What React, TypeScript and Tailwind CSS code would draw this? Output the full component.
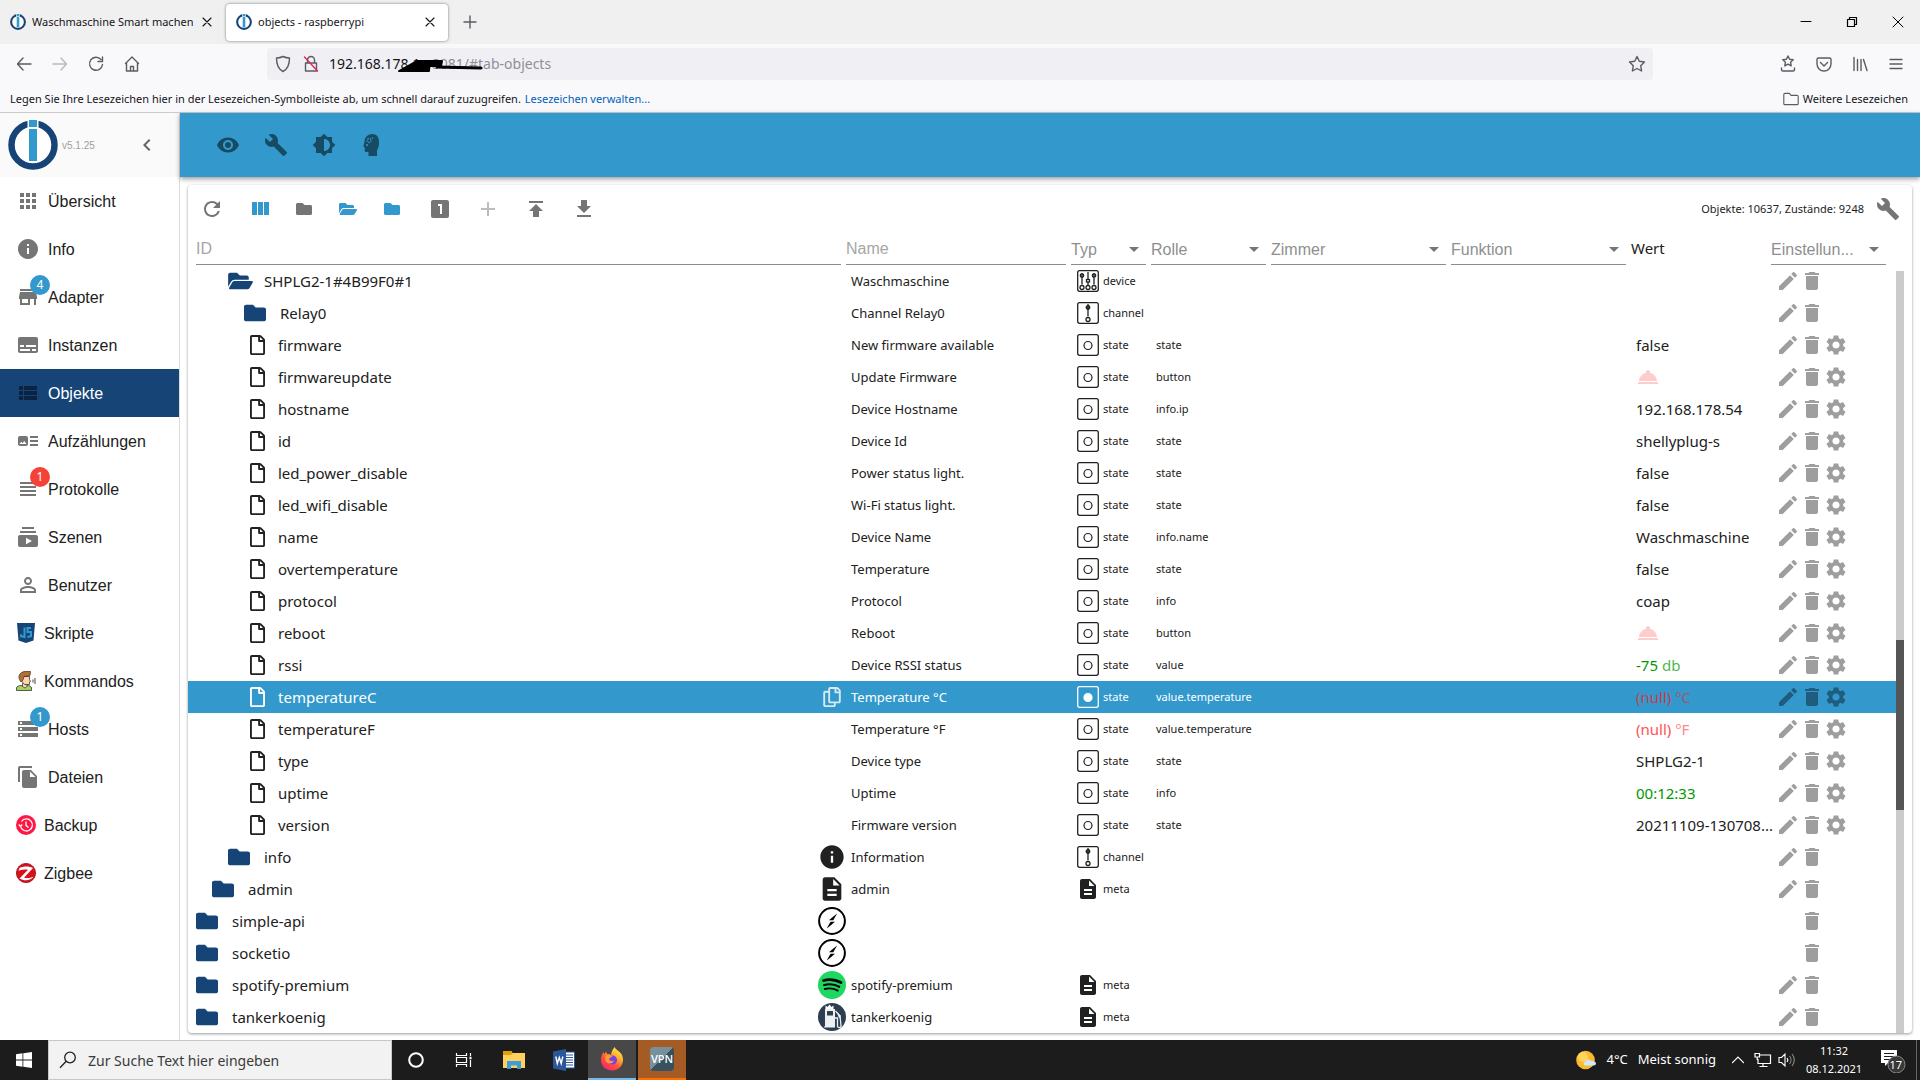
import type { ComponentType, ReactNode } from "react";
import {
  MdAdd,
  MdApps,
  MdArrowDropDown,
  MdArtTrack,
  MdBrightness6,
  MdBuild,
  MdChevronLeft,
  MdDelete,
  MdDescription,
  MdEdit,
  MdFileCopy,
  MdInfo,
  MdLooksOne,
  MdPersonOutline,
  MdRefresh,
  MdRoomService,
  MdSettings,
  MdStorage,
  MdSubscriptions,
  MdSubtitles,
  MdViewHeadline,
  MdViewList,
  MdVisibility,
} from "react-icons/md";
import { FaFolder, FaFolderOpen, FaRegCopy, FaRegFile } from "react-icons/fa";

type IconType = ComponentType<{ className?: string }>;

const path = (d: string): IconType =>
  function PathIcon({ className }) {
    return (
      <svg viewBox="0 0 24 24" fill="currentColor" className={className}>
        <path d={d} />
      </svg>
    );
  };

const StoreIcon = path("M20 4H4v2h16V4zm1 10v-2l-1-5H4l-1 5v2h1v6h10v-6h4v6h2v-6h1zm-9 4H6v-4h6v4z");
const ColumnsIcon = path("M10 18h5V5h-5v13zm-6 0h5V5H4v13zM16 5v13h5V5h-5z");
const UploadIcon = path("M5 4v2h14V4H5zm0 10h4v6h6v-6h4l-7-7-7 7z");
const DownloadIcon = path("M19 9h-4V3H9v6H5l7 7 7-7zM5 18v2h14v-2H5z");

function HeadIcon({ className }: { className?: string }) {
  return (
    <svg viewBox="0 0 24 24" className={className}>
      <path
        fill="currentColor"
        d="M12.500 1C8 1 5 4 4.500 8c0 1-.1 1.700-.5 2.700L3.500 13c-.2.500 0 .9.500 1l.7.3v3.200c0 1 .6 1.500 1.500 1.500l2.300-.2V23H17v-6c1.700-2 2-4 2-8.500C19 4 16.500 1 12.500 1z"
      />
      <circle cx="9" cy="7.500" r="2" fill="none" stroke="#3399cc" strokeWidth="1.300" strokeDasharray="1.400 0.900" />
      <circle cx="7" cy="12" r="1" fill="#3399cc" />
      <circle cx="12.500" cy="5" r="0.800" fill="#3399cc" />
    </svg>
  );
}

function BrokerLogo({ className }: { className?: string }) {
  return (
    <svg viewBox="0 0 50 50" className={className}>
      <circle cx="25" cy="25" r="21.500" fill="#fff" stroke="#164477" strokeWidth="6.500" />
      <rect x="19.500" y="0" width="11" height="9" fill="#fff" />
      <rect x="21" y="0" width="8" height="7" fill="#3399cc" />
      <rect x="21" y="9" width="8" height="32" fill="#3399cc" />
    </svg>
  );
}

/* ---------- Browser ---------- */

function Stroke({ children, className = "size-5" }: { children: ReactNode; className?: string }) {
  return (
    <svg
      viewBox="0 0 20 20"
      fill="none"
      stroke="currentColor"
      strokeWidth="1.400"
      strokeLinecap="round"
      strokeLinejoin="round"
      className={className}
    >
      {children}
    </svg>
  );
}

const CloseX = () => (
  <Stroke className="size-4">
    <path d="M5 5l10 10M15 5L5 15" />
  </Stroke>
);

function Browser() {
  return (
    <header className="shrink-0 border-b border-[#cccccc] bg-[#f9f9fb] text-[#15141a]">
      <div className="flex h-11 items-center bg-[#f0f0f0] text-[11px]">
        <div className="flex w-[226px] items-center gap-1.5 pl-2.5">
          <BrokerLogo className="size-4 shrink-0" />
          <span className="w-[161px] overflow-hidden whitespace-nowrap">Waschmaschine Smart machen</span>
          <button aria-label="Tab schließen"><CloseX /></button>
        </div>
        <div className="flex h-[37px] w-[222px] items-center gap-1.5 rounded bg-white px-2.5 shadow-[0_0_3px_rgba(0,0,0,0.5)]">
          <BrokerLogo className="size-4 shrink-0" />
          <span className="flex-1">objects - raspberrypi</span>
          <button aria-label="Tab schließen"><CloseX /></button>
        </div>
        <button className="ml-3 text-[#5b5b66]" aria-label="Neuer Tab">
          <Stroke><path d="M10 4v12M4 10h12" /></Stroke>
        </button>
        <div className="ml-auto flex items-center gap-[26px] pr-3 text-black">
          <button aria-label="Minimieren"><Stroke><path d="M5 9.500h10" strokeWidth="1" /></Stroke></button>
          <button aria-label="Verkleinern">
            <Stroke><path strokeWidth="1.200" d="M5.500 7.500h7v7h-7zM7.500 7.500v-2h7v7h-2" /></Stroke>
          </button>
          <button aria-label="Schließen"><Stroke><path strokeWidth="1" d="M5 5l10 10M15 5L5 15" /></Stroke></button>
        </div>
      </div>
      <div className="flex h-11 items-center pb-1 pl-3.5 pr-3.5 text-[#5b5b66]">
        <div className="flex w-[253px] items-center gap-4">
          <button aria-label="Zurück"><Stroke><path d="M17 10H3.500M9 4L3.500 10 9 16" /></Stroke></button>
          <button aria-label="Vor" className="opacity-40"><Stroke><path d="M3 10h13.500M11 4l5.500 6-5.500 6" /></Stroke></button>
          <button aria-label="Neu laden"><Stroke><path d="M16.500 10.500A6.500 6.500 0 1 1 15 5.500M16.500 3v4.500H12" /></Stroke></button>
          <button aria-label="Startseite"><Stroke><path d="M3.500 9.500L10 3l6.500 6.500M4.500 9v8h11V9M8.500 17v-4.500h3V17" /></Stroke></button>
        </div>
        <div className="relative flex h-8 flex-1 items-center rounded bg-[#f0f0f4] pl-1.5 pr-1.5">
          <Stroke><path d="M10 2.500c2 1 4.500 1.500 6.500 1.500 0 6-1.500 11-6.500 13.500C5 15 3.500 10 3.500 4 5.500 4 8 3.500 10 2.500z" /></Stroke>
          <Stroke className="ml-2 size-5">
            <path d="M4.500 9h11v8h-11zM6.500 9V6a3.500 3.500 0 0 1 7 0v3" />
            <path d="M3.500 3l13 14" stroke="#e22850" />
          </Stroke>
          <input aria-label="Adresse" className="ml-2 w-[99px] bg-transparent text-sm text-[#15141a]" defaultValue="192.168.178.1" />
          <span className="text-sm text-[#8f8f98]">:8081/#tab-objects</span>
          <svg viewBox="0 0 86 14" className="absolute left-[130px] top-[11px] h-[14px] w-[86px]">
            <path d="M2 12h30v-5h12l1-5H20z" stroke="#000" strokeWidth="2" fill="#000" strokeLinecap="round" strokeLinejoin="round" />
            <path d="M40 8l44 1" stroke="#000" strokeWidth="3" strokeLinecap="round" />
          </svg>
          <button className="ml-auto" aria-label="Lesezeichen">
            <Stroke><path d="M10 2.500l2.300 4.800 5.200.7-3.800 3.700.9 5.300L10 14.500 5.400 17l.9-5.300L2.500 8l5.200-.7z" /></Stroke>
          </button>
        </div>
        <div className="flex w-[253px] items-center justify-end gap-4">
          <button aria-label="Lesezeichenmenü">
            <Stroke><path d="M10 2l1.600 3.300 3.600.5-2.600 2.500.6 3.600L10 10.200l-3.200 1.700.6-3.600-2.600-2.500 3.600-.5zM3.500 14v1.500c0 1 .5 1.500 1.500 1.500h10c1 0 1.500-.5 1.500-1.500V14" /></Stroke>
          </button>
          <button aria-label="Pocket">
            <Stroke><path d="M4.500 4h11c1 0 1.500.5 1.500 1.500V10a7 7 0 0 1-14 0V5.500C3 4.500 3.500 4 4.500 4zM6.500 8.500L10 12l3.500-3.500" /></Stroke>
          </button>
          <button aria-label="Bibliothek"><Stroke><path d="M4 3.500v13M7.500 5.500v11M11 5.500v11M13.500 5.500l3.500 11" /></Stroke></button>
          <button aria-label="Menü"><Stroke><path d="M4 5.500h12M4 10h12M4 14.500h12" /></Stroke></button>
        </div>
      </div>
      <div className="flex h-6 items-center gap-1 px-2.5 pb-0.5 text-[11px]">
        <span>Legen Sie Ihre Lesezeichen hier in der Lesezeichen-Symbolleiste ab, um schnell darauf zuzugreifen.</span>
        <a href="#lesezeichen" className="text-[#0061bd]">Lesezeichen verwalten...</a>
        <button className="ml-auto flex items-center gap-1 pr-0.5">
          <Stroke className="size-4 text-[#5b5b66]"><path d="M1 16V4.500C1 3.500 1.500 3 2.500 3H8l2 2.500h7.500c1 0 1.500.5 1.500 1.500V16c0 .7-.5 1-1 1H2c-.7 0-1-.5-1-1z" /></Stroke>
          Weitere Lesezeichen
        </button>
      </div>
    </header>
  );
}

/* ---------- Sidebar ---------- */

function ScriptIcon() {
  return (
    <svg viewBox="0 0 20 20" className="size-5">
      <path d="M1 0h18l-1.500 17.500L10 20l-7.500-2.500z" fill="#164477" />
      <path d="M8.500 4.500V14l-3.500-.8v-2M15 5h-3.500v4H15v4.200l-3.500.8" fill="none" stroke="#3399cc" strokeWidth="2" />
    </svg>
  );
}

function VoiceIcon() {
  return (
    <svg viewBox="0 0 20 20" className="size-5">
      <path d="M.5 19.500V17c0-1.500 2.500-2.500 4.500-2.500h6c2.500 0 4.500 1 4.500 2.500v2.500z" fill="#a4d65e" stroke="#333" strokeWidth=".8" />
      <path d="M6.500 12v3.500l2.500 1.500 2-1.500V13" fill="#fbd3ae" stroke="#333" strokeWidth=".7" />
      <path d="M5.500 5.500h8v3l1 2-1 .5v2.500H8.500L6 10.500z" fill="#fbd3ae" stroke="#333" strokeWidth=".8" />
      <path d="M5 11C2.500 8 2 4 5 2c2.500-2 6-1.700 9.500-1.500L14 4.500c-2 1-3.500.8-6 .8L7 9z" fill="#b0703a" stroke="#4a2c14" strokeWidth=".7" />
      <path d="M17 8.500v3M19 7v6" stroke="#666" strokeWidth="1.200" />
    </svg>
  );
}

function BackupIcon() {
  return (
    <svg viewBox="0 0 20 20" className="size-5">
      <circle cx="10" cy="10" r="10" fill="#ff1744" />
      <path d="M4.500 11a6 6 0 1 0 1-4.500M10 6.500V10.500l2.500 2M2.800 9.500l1.700 2 1.800-2" fill="none" stroke="#fff" strokeWidth="1.300" />
    </svg>
  );
}

function ZigbeeIcon() {
  return (
    <svg viewBox="0 0 20 20" className="size-5">
      <circle cx="10" cy="10" r="9.600" fill="#d8101c" stroke="#8d0d14" strokeWidth=".8" />
      <path d="M3.500 5C7.500 3 13 3 17 5L8 14.800c3.500.5 6.500.3 9.500-1-2.500 3.700-9 4.700-14 1.700L12 6.700c-3-.5-6-.2-9.500 1z" fill="#fff" />
    </svg>
  );
}

type NavItem = { label: string; Icon: IconType; badge?: string; red?: boolean };

const NAV: NavItem[] = [
  { label: "Übersicht", Icon: MdApps },
  { label: "Info", Icon: MdInfo },
  { label: "Adapter", Icon: StoreIcon, badge: "4" },
  { label: "Instanzen", Icon: MdSubtitles },
  { label: "Objekte", Icon: MdViewList },
  { label: "Aufzählungen", Icon: MdArtTrack },
  { label: "Protokolle", Icon: MdViewHeadline, badge: "1", red: true },
  { label: "Szenen", Icon: MdSubscriptions },
  { label: "Benutzer", Icon: MdPersonOutline },
  { label: "Skripte", Icon: ScriptIcon },
  { label: "Kommandos", Icon: VoiceIcon },
  { label: "Hosts", Icon: MdStorage, badge: "1" },
  { label: "Dateien", Icon: MdFileCopy },
  { label: "Backup", Icon: BackupIcon },
  { label: "Zigbee", Icon: ZigbeeIcon },
];

function Sidebar() {
  return (
    <aside className="w-[180px] shrink-0 border-r border-[#dcdcdc] bg-white font-['Liberation_Sans',Arial,sans-serif]">
      <div className="flex h-16 items-center bg-[#fafafa] pl-2">
        <BrokerLogo className="size-[50px]" />
        <span className="ml-1 text-[10px] text-[#a0a0a0]">v5.1.25</span>
        <button className="ml-auto mr-5 text-[#666666]" aria-label="Menü einklappen">
          <MdChevronLeft className="size-6" />
        </button>
      </div>
      <nav>
        {NAV.map(({ label, Icon, badge, red }) => {
          const active = label === "Objekte";
          return (
            <a
              key={label}
              href={"#tab-" + label.toLowerCase()}
              className={
                "flex h-12 items-center gap-2 pl-4 text-base " +
                (active ? "bg-[#164477] text-white" : "text-[#212121]")
              }
            >
              <span className={"relative flex " + (active ? "text-[#0b2340]" : "text-[#757575]")}>
                <Icon className="size-6" />
                {badge && (
                  <span
                    className={
                      "absolute -right-2.5 -top-2.5 flex size-5 items-center justify-center rounded-full font-['Noto_Sans',sans-serif] text-xs text-white " +
                      (red ? "bg-[#f44336]" : "bg-[#3399cc]")
                    }
                  >
                    {badge}
                  </span>
                )}
              </span>
              <span className="pt-0.5">{label}</span>
            </a>
          );
        })}
      </nav>
    </aside>
  );
}

/* ---------- Object table ---------- */

function TypeIcon({ type, active }: { type: string; active?: boolean }) {
  if (type === "meta") return <MdDescription className="size-6" />;
  return (
    <svg viewBox="0 0 24 24" fill="none" stroke="currentColor" className="size-6">
      <rect x="1.700" y="1.700" width="20.600" height="20.600" rx="2" strokeWidth="1.300" />
      {type === "state" && <circle cx="12" cy="12.500" r="4" strokeWidth="1.200" fill={active ? "currentColor" : "none"} />}
      {(type === "channel" || type === "device") && (
        <g strokeWidth="1.300">
          {type === "channel" && (
            <>
              <circle cx="12" cy="6.500" r="1.800" fill="#666" />
              <path d="M12 3v12.500" />
              <circle cx="12" cy="18.500" r="2" />
            </>
          )}
          {type === "device" && (
            <>
              <path d="M6 4v11.500M12 3v13M18 4v11.500" />
              <circle cx="6" cy="6.500" r="1.700" fill="#666" />
              <rect x="10.500" y="10.500" width="3" height="2.500" fill="#fff" />
              <circle cx="18" cy="6.500" r="1.700" fill="#666" />
              <circle cx="6" cy="18.500" r="2" />
              <circle cx="12" cy="18.500" r="2" />
              <circle cx="18" cy="18.500" r="2" />
            </>
          )}
        </g>
      )}
    </svg>
  );
}

const SocketIcon = () => (
  <svg viewBox="0 0 28 28" className="size-7">
    <circle cx="14" cy="14" r="12.900" fill="#fff" stroke="#000" strokeWidth="2" />
    <path d="M11 13.200c2.700-2.200 5.300-4.500 8.200-6.600-1.300 2.200-2.600 4.400-3.900 6.600zM12.600 14.800h4.300c-2.700 2.300-5.300 4.500-8.200 6.600 1.300-2.200 2.600-4.400 3.900-6.600z" fill="#000" />
  </svg>
);

const SpotifyIcon = () => (
  <svg viewBox="0 0 28 28" className="size-7">
    <circle cx="14" cy="14" r="14" fill="#1ed760" />
    <g fill="none" stroke="#000" strokeLinecap="round">
      <path d="M5.500 9.500c5.500-1.500 12-1 17.500 2" strokeWidth="2.700" />
      <path d="M6.200 14c5-1.300 10.500-.8 15 1.800" strokeWidth="2.200" />
      <path d="M6.800 18c4.500-1 9-.6 13 1.600" strokeWidth="1.800" />
    </g>
  </svg>
);

const PumpIcon = () => (
  <svg viewBox="0 0 28 28" className="size-7">
    <circle cx="14" cy="14" r="14" fill="#2c3e50" />
    <path d="M7.500 2.500l2 1.500L11.500 1.500 13.500 4l2-1.500V6h-8z" fill="#fff" />
    <path d="M7 6h10v18.500H6V24l1-1z" fill="#ecf0f1" />
    <rect x="9" y="8" width="6" height="4.500" rx=".5" fill="#2c3e50" />
    <path d="M17 15h2.500v8c0 2.500 4 2 3.500-.5L22 13l-4.500-5" fill="none" stroke="#ecf0f1" strokeWidth="1.300" />
    <path d="M19 9l3.500 3.500V16l-2-2z" fill="#ecf0f1" />
  </svg>
);

const ID_ICONS: Record<string, ReactNode> = {
  copy: <FaRegCopy className="size-5 opacity-80" />,
  info: <MdInfo className="size-7" />,
  doc: <MdDescription className="size-7" />,
  socket: <SocketIcon />,
  spotify: <SpotifyIcon />,
  pump: <PumpIcon />,
};

type Row = {
  id: string;
  kind?: "open" | "folder";
  level?: number;
  icon?: string;
  name?: string;
  type?: string;
  role?: string;
  value?: string;
  unit?: string;
  tone?: "green" | "red";
};

const state = (id: string, name: string, role: string, value: string, extra: Partial<Row> = {}): Row => ({
  id, name, role, value, type: "state", ...extra,
});

const ROWS: Row[] = [
  { id: "SHPLG2-1#4B99F0#1", kind: "open", level: 2, name: "Waschmaschine", type: "device" },
  { id: "Relay0", kind: "folder", level: 3, name: "Channel Relay0", type: "channel" },
  state("firmware", "New firmware available", "state", "false"),
  state("firmwareupdate", "Update Firmware", "button", ""),
  state("hostname", "Device Hostname", "info.ip", "192.168.178.54"),
  state("id", "Device Id", "state", "shellyplug-s"),
  state("led_power_disable", "Power status light.", "state", "false"),
  state("led_wifi_disable", "Wi-Fi status light.", "state", "false"),
  state("name", "Device Name", "info.name", "Waschmaschine"),
  state("overtemperature", "Temperature", "state", "false"),
  state("protocol", "Protocol", "info", "coap"),
  state("reboot", "Reboot", "button", ""),
  state("rssi", "Device RSSI status", "value", "-75", { unit: "db", tone: "green" }),
  state("temperatureC", "Temperature °C", "value.temperature", "(null)", { unit: "°C", tone: "red", icon: "copy" }),
  state("temperatureF", "Temperature °F", "value.temperature", "(null)", { unit: "°F", tone: "red" }),
  state("type", "Device type", "state", "SHPLG2-1"),
  state("uptime", "Uptime", "info", "00:12:33", { tone: "green" }),
  state("version", "Firmware version", "state", "20211109-130708..."),
  { id: "info", kind: "folder", level: 2, icon: "info", name: "Information", type: "channel" },
  { id: "admin", kind: "folder", level: 1, icon: "doc", name: "admin", type: "meta" },
  { id: "simple-api", kind: "folder", level: 0, icon: "socket" },
  { id: "socketio", kind: "folder", level: 0, icon: "socket" },
  { id: "spotify-premium", kind: "folder", level: 0, icon: "spotify", name: "spotify-premium", type: "meta" },
  { id: "tankerkoenig", kind: "folder", level: 0, icon: "pump", name: "tankerkoenig", type: "meta" },
];

const INDENT = ["pl-2", "pl-6", "pl-10", "pl-14"];

function ObjectRow({ row }: { row: Row }) {
  const selected = row.id === "temperatureC";
  const isState = row.type === "state";
  const tone = row.tone === "green" ? "text-[#009900]" : row.tone === "red" ? (selected ? "text-[#c5414f]" : "text-[#ff5252]") : "";
  return (
    <tr className={"h-8 " + (selected ? "bg-[#3399cc] text-white" : "text-[#212121]")}>
      <td>
        <div className={"flex h-8 items-center " + (row.kind ? INDENT[row.level ?? 0] : "pl-[62px]")}>
          {row.kind === "open" && <FaFolderOpen className="mr-[11px] h-[22px] w-[25px] text-[#164477]" />}
          {row.kind === "folder" && <FaFolder className="mr-3.5 size-[22px] text-[#164477]" />}
          {!row.kind && <FaRegFile className="mr-[13px] h-5 w-[15px]" />}
          <span className="text-[15px]">{row.id}</span>
          <span className="ml-auto flex w-7 justify-center">{row.icon && ID_ICONS[row.icon]}</span>
        </div>
      </td>
      <td className="pl-[5px] pt-0.5 text-[13px]">{row.name}</td>
      <td className="pl-[5px]">
        {row.type && (
          <div className="flex items-center gap-[3px] text-[11px]">
            <TypeIcon type={row.type} active={selected} />
            {row.type}
          </div>
        )}
      </td>
      <td className="pl-[5px] text-[11px]">{row.role}</td>
      <td />
      <td />
      <td className={"whitespace-nowrap pl-[5px] text-[15px] " + tone}>
        {row.role === "button" ? (
          <button aria-label="Auslösen" className="flex text-[#ffcccc]"><MdRoomService className="size-6" /></button>
        ) : (
          <>
            {row.value}
            {row.unit && <span className="opacity-70"> {row.unit}</span>}
          </>
        )}
      </td>
      <td>
        <div className={"flex pl-[5px] " + (selected ? "text-[#1f5c7d]" : "text-[#9e9e9e]")}>
          {row.type ? (
            <button aria-label={row.id + " bearbeiten"}><MdEdit className="size-6" /></button>
          ) : (
            <span className="w-6" />
          )}
          <button aria-label={row.id + " löschen"}><MdDelete className="size-6" /></button>
          {isState && <button aria-label={row.id + " Einstellungen"}><MdSettings className="size-6" /></button>}
        </div>
      </td>
    </tr>
  );
}

const filterLine = "block w-full border-b border-[#8c8c8c] bg-transparent text-base font-normal";

function FilterInput({ label }: { label: string }) {
  return <input aria-label={label} placeholder={label} className={filterLine + " h-8 placeholder:text-[#a6a6a6]"} />;
}

function FilterSelect({ label, text }: { label: string; text?: string }) {
  return (
    <div className="relative">
      <select aria-label={label} className={filterLine + " h-8 appearance-none pr-6 pt-0.5 text-[#8f8f8f]"}>
        <option>{text ?? label}</option>
      </select>
      <MdArrowDropDown className="pointer-events-none absolute right-0 top-1 size-6 text-[#757575]" />
    </div>
  );
}

const TOOLS: { label: string; Icon: IconType; color: string; icon: string; box: string }[] = [
  { label: "Aktualisieren", Icon: MdRefresh, color: "text-[#757575]", icon: "size-6", box: "w-12" },
  { label: "Spalten", Icon: ColumnsIcon, color: "text-[#3399cc]", icon: "size-6", box: "w-12" },
  { label: "Alle zuklappen", Icon: FaFolder, color: "text-[#757575]", icon: "size-4", box: "w-10" },
  { label: "Alle aufklappen", Icon: FaFolderOpen, color: "text-[#3399cc]", icon: "h-4 w-[18px]", box: "w-12" },
  { label: "Eine Ebene zuklappen", Icon: FaFolder, color: "text-[#3399cc]", icon: "size-4", box: "w-10" },
  { label: "Eine Ebene", Icon: MdLooksOne, color: "text-[#757575]", icon: "size-6", box: "w-14" },
  { label: "Hinzufügen", Icon: MdAdd, color: "text-[#bdbdbd]", icon: "size-6", box: "w-10" },
  { label: "Hochladen", Icon: UploadIcon, color: "text-[#757575]", icon: "size-6", box: "w-14" },
  { label: "Herunterladen", Icon: DownloadIcon, color: "text-[#757575]", icon: "size-6", box: "w-10" },
];

function Objects() {
  return (
    <section className="flex min-h-0 flex-1 flex-col overflow-hidden rounded bg-white shadow-[0_1px_3px_rgba(0,0,0,0.4)]">
      <div className="flex h-12 shrink-0 items-center pr-3">
        {TOOLS.map(({ label, Icon, color, icon, box }) => (
          <button key={label} aria-label={label} className={"flex justify-center " + box + " " + color}>
            <Icon className={icon} />
          </button>
        ))}
        <span className="ml-auto text-[11px] text-[#212121]">Objekte: 10637, Zustände: 9248</span>
        <button aria-label="Werkzeuge" className="ml-3 text-[#757575]"><MdBuild className="size-6" /></button>
      </div>
      <div className="flex min-h-0 flex-1 pr-2">
        <table className="w-full table-fixed border-collapse self-start text-left">
          <colgroup>
            <col />
            <col className="w-[225px]" />
            <col className="w-20" />
            <col className="w-[120px]" />
            <col className="w-[180px]" />
            <col className="w-[180px]" />
            <col className="w-[140px]" />
            <col className="w-[125px]" />
          </colgroup>
          <thead className="font-['Liberation_Sans',Arial,sans-serif]">
            <tr className="h-8">
              <th className="pl-2 pr-[5px]"><FilterInput label="ID" /></th>
              <th className="pr-[5px]"><FilterInput label="Name" /></th>
              <th className="pr-[5px]"><FilterSelect label="Typ" /></th>
              <th className="pr-[5px]"><FilterSelect label="Rolle" /></th>
              <th className="pr-[5px]"><FilterSelect label="Zimmer" /></th>
              <th className="pr-[5px]"><FilterSelect label="Funktion" /></th>
              <th className="pb-0.5 font-['Noto_Sans',sans-serif] text-[15px] font-normal text-[#212121]">Wert</th>
              <th className="pr-2.5"><FilterSelect label="Einstellungen" text="Einstellun..." /></th>
            </tr>
          </thead>
          <tbody>
            {ROWS.map((row) => <ObjectRow key={row.id} row={row} />)}
          </tbody>
        </table>
        <div className="mt-[38px] flex w-2 shrink-0 flex-col bg-[#cbcbcb]">
          <div className="grow-[48]" />
          <div className="grow-[22] bg-[#555555]" />
          <div className="grow-[29]" />
        </div>
      </div>
    </section>
  );
}

/* ---------- Taskbar ---------- */

function Taskbar() {
  return (
    <footer className="flex h-10 shrink-0 items-center bg-[#1c1c1c] text-white">
      <button aria-label="Start" className="flex w-12 justify-center">
        <svg viewBox="0 0 16 16" className="size-4" fill="#fff"><path d="M0 2.200L6.500 1.300v6.200H0zM7.300 1.200L16 0v7.500H7.300zM0 8.400h6.500v6.300L0 13.800zM7.300 8.400H16V16l-8.700-1.200z" /></svg>
      </button>
      <label className="flex h-10 w-[344px] items-center gap-[11px] border border-[#c8c8c8] bg-[#f2f2f2] pl-2.5">
        <svg viewBox="0 0 18 18" className="size-[18px]" fill="none" stroke="#222" strokeWidth="1.300"><circle cx="11" cy="6.500" r="5.300" /><path d="M7.200 10.300L1 16.700" /></svg>
        <input aria-label="Suche" placeholder="Zur Suche Text hier eingeben" className="flex-1 bg-transparent pt-0.5 text-sm placeholder:text-[#3a3a3a]" />
      </label>
      <button aria-label="Cortana" className="flex w-12 justify-center">
        <svg viewBox="0 0 18 18" className="size-[18px]"><circle cx="9" cy="9" r="6.800" fill="none" stroke="#fff" strokeWidth="2" /></svg>
      </button>
      <button aria-label="Aktive Anwendungen" className="flex w-12 justify-center">
        <svg viewBox="0 0 18 18" className="size-[18px]" fill="none" stroke="#fff" strokeWidth="1.200"><path d="M1.500 2v2.500h10V2M1.500 16v-2.500h10V16M1.500 6.500h10v5h-10zM15.500 2v3M15.500 9v7" /><path d="M14.500 7h2" strokeWidth="2.500" /></svg>
      </button>
      <button aria-label="Explorer" className="flex w-13 justify-center">
        <svg viewBox="0 0 22 20" className="h-5 w-[22px]">
          <path d="M0 1h8.500l1 2H0z" fill="#e0a00e" />
          <path d="M0 3h22v15H0z" fill="#ffd15c" />
          <path d="M0 1h8.500l1 2.500L7.500 5H0z" fill="#e0a00e" />
          <path d="M4 11h14v8h-4v-3.500H8V19H4z" fill="#3b9ddd" />
        </svg>
      </button>
      <button aria-label="Word" className="flex w-12 justify-center">
        <svg viewBox="0 0 22 22" className="size-[22px]"><rect x="9" y="3" width="12.500" height="16" fill="#fff" stroke="#2b579a" /><path d="M13 6h7M13 8.500h7M13 11h7M13 13.500h7M13 16h7" stroke="#2b579a" /><path d="M0 2.500L13 0v22L0 19.500z" fill="#2b579a" /><path d="M2.800 7.500L4.300 14.500 6.300 8.500 8.200 14.500 9.800 7.500" fill="none" stroke="#fff" strokeWidth="1.400" /></svg>
      </button>
      <button aria-label="Firefox" className="flex h-10 w-12 items-center justify-center border-b-2 border-[#76b9ed] bg-[#484848]">
        <svg viewBox="0 0 24 24" className="size-6">
          <defs>
            <linearGradient id="fox" x1="0.85" y1="0" x2="0.2" y2="1">
              <stop offset="0" stopColor="#fff44f" />
              <stop offset=".35" stopColor="#ffb02a" />
              <stop offset=".65" stopColor="#ff5038" />
              <stop offset="1" stopColor="#f0237e" />
            </linearGradient>
          </defs>
          <path d="M14.500 0c1 2.500 4.500 4 6.500 6.500 1 1.200 1.500 2.500 2 5.500.5 6-4 11.500-11 11.500S.5 18.500 1 12c.2-2.500 1-4.800 2.500-7 .1 1 .4 1.700 1 2.200L6 4.500 7 7c1.500-.3 3 .2 4 1 .5-3 1.500-5.500 3.500-8z" fill="url(#fox)" />
          <circle cx="12.500" cy="13" r="4.500" fill="#7542e5" />
          <path d="M5 9.500C7.500 7.500 10.500 8 12.500 9.500c-1.200 1-3 .8-3.300 2.300-.2 2 2.800 3 4.800 1.700-1 3.500-6.500 4-8.500.5z" fill="#ff9a36" />
        </svg>
      </button>
      <button aria-label="VPN" className="ml-0.5 flex h-10 w-12 items-center justify-center border-b-2 border-[#ff6f00] bg-[#a55c24]">
        <span className="flex size-6 items-center justify-center rounded-sm bg-linear-to-br from-[#78909c] from-50% to-[#37525e] to-50% font-['Open_Sans',sans-serif] text-[11px] font-semibold">VPN</span>
      </button>
      <div className="ml-auto flex items-center">
        <svg viewBox="0 0 20 20" className="size-5"><circle cx="9.500" cy="10" r="9.300" fill="#fdb92e" /><circle cx="7" cy="7" r="5" fill="#ffd45c" /><path d="M9 15.500c-2-.3-2-3.500.5-3.700C10 9 14 8.500 15 11c3-.3 5 1 5 2.500 0 1.300-1 2-2.500 2z" fill="#cfe8fb" /></svg>
        <span className="ml-2.5 text-[13px]">4°C</span>
        <span className="ml-2.5 text-[13px]">Meist sonnig</span>
        <svg viewBox="0 0 12 12" className="ml-4 size-3" fill="none" stroke="#fff" strokeWidth="1.200"><path d="M0 9l6-6 6 6" /></svg>
        <svg viewBox="0 0 18 16" className="ml-2.5 h-4 w-[18px]" fill="none" stroke="#fff" strokeWidth="1.200"><path d="M5 3h11.500v8.500H4V7M9 11.500v3M5.500 14.500h8M1 1.500h4.500V5H1zM3.200 5v3" /></svg>
        <svg viewBox="0 0 18 16" className="ml-1.5 h-4 w-[18px]" fill="none" stroke="#fff" strokeWidth="1.100"><path d="M1 5.500h2.500L7 2v12l-3.500-3.500H1zM9 6c1 1.200 1 2.800 0 4" /><path d="M11.500 4c2 2.300 2 5.700 0 8M14 2c3 3.500 3 8.500 0 12" opacity=".5" /></svg>
        <div className="w-18 pl-1 text-center text-[11px] leading-[18px]"><div>11:32</div><div>08.12.2021</div></div>
        <button aria-label="Benachrichtigungen" className="relative ml-3 flex">
          <svg viewBox="0 0 26 26" className="size-[26px]"><path d="M1 3h16v13H8l-3 3v-3H1z" fill="#fff" /><path d="M4 6.500h10M4 9.500h10M4 12.500h7" stroke="#1c1c1c" /><circle cx="16.500" cy="17.500" r="8.500" fill="#383838" stroke="#888" /></svg>
          <span className="absolute bottom-0 right-1 text-[11px] leading-[17px]">17</span>
        </button>
        <span className="ml-2.5 h-10 w-1 border-l border-[#666666]" />
      </div>
    </footer>
  );
}

export default function App() {
  return (
    <div className="flex h-screen flex-col overflow-hidden bg-white font-['Noto_Sans',sans-serif]">
      <Browser />
      <div className="flex min-h-0 flex-1">
        <Sidebar />
        <main className="flex min-w-0 flex-1 flex-col">
          <div className="z-10 flex h-16 shrink-0 items-center gap-6 bg-[#3399cc] pl-9 text-[#174a63] shadow-[0_2px_5px_rgba(0,0,0,0.4)]">
            <button aria-label="Sichtbarkeit"><MdVisibility className="size-6" /></button>
            <button aria-label="Einstellungen"><MdBuild className="size-6" /></button>
            <button aria-label="Farbschema"><MdBrightness6 className="size-6" /></button>
            <button aria-label="Expertenmodus"><HeadIcon className="size-6" /></button>
          </div>
          <div className="flex min-h-0 flex-1 flex-col px-2 pb-[7px] pt-2">
            <Objects />
          </div>
        </main>
      </div>
      <Taskbar />
    </div>
  );
}
